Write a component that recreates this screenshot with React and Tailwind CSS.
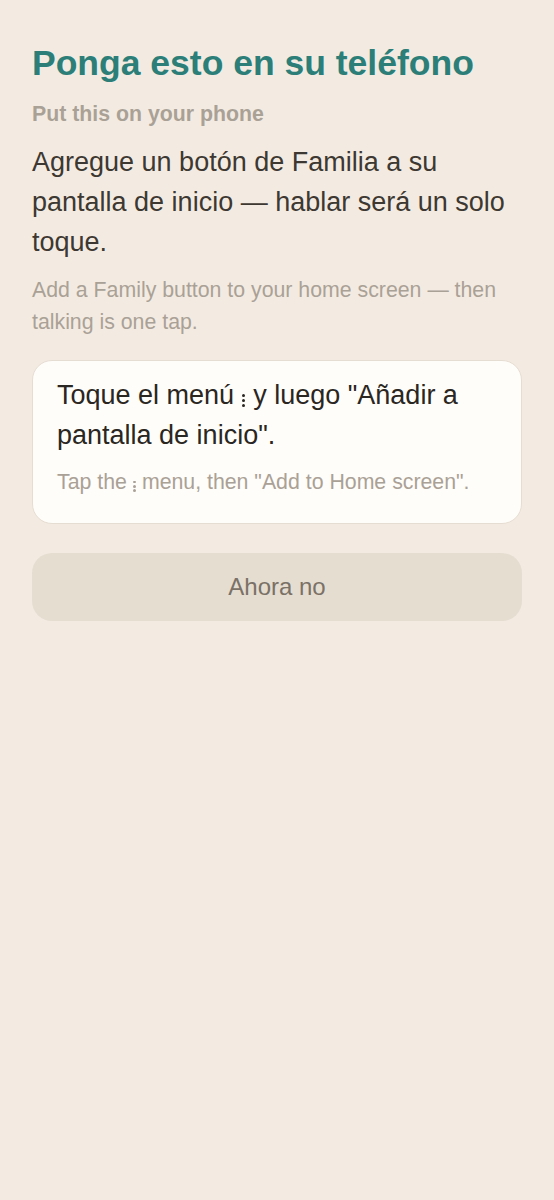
// vertical ellipsis drawn as three dots, like the browser menu icon
const Dots = () => (
  <span className="inline-block w-[0.15em] align-[-0.12em]">
    <span className="mx-auto block h-[0.115em] w-[0.115em] rounded-full bg-current" />
    <span className="mx-auto mt-[0.075em] block h-[0.115em] w-[0.115em] rounded-full bg-current" />
    <span className="mx-auto mt-[0.075em] block h-[0.115em] w-[0.115em] rounded-full bg-current" />
  </span>
);

export default function App() {
  return (
    <div className="min-h-screen bg-[#f3ebe2] px-8 pt-[41px] font-['Liberation_Sans',Arial,sans-serif]">
      <h1 className="text-[35.5px] font-bold leading-[44px] text-[#2b7f78]">Ponga esto en su teléfono</h1>
      <p className="mt-[15px] text-[21.3px] font-bold leading-[28px] text-[#aaa196]">Put this on your phone</p>
      <p className="mt-[14px] text-[27px] leading-[40px] text-[#3d3831]">
        Agregue un botón de Familia a su pantalla de inicio — hablar será un solo toque.
      </p>
      <p className="mt-[12px] text-[21.3px] leading-[32px] text-[#aaa196]">
        Add a Family button to your home screen — then talking is one tap.
      </p>

      <div className="mt-[22px] rounded-[20px] border border-[#e6ddd2] bg-[#fffdf9] px-6 pb-[27px] pt-[14px]">
        <p className="text-[27px] leading-[40px] text-[#2a2622]">
          Toque el menú <Dots /> y luego "Añadir a pantalla de inicio".
        </p>
        <p className="mt-[13px] text-[21.3px] leading-[28px] text-[#aaa196]">
          Tap the <Dots /> menu, then "Add to Home screen".
        </p>
      </div>

      <button className="mt-[29px] flex h-[68px] w-full items-center justify-center rounded-[20px] bg-[#e6ddd1] text-[24px] text-[#7a7167]">
        Ahora no
      </button>
    </div>
  );
}
